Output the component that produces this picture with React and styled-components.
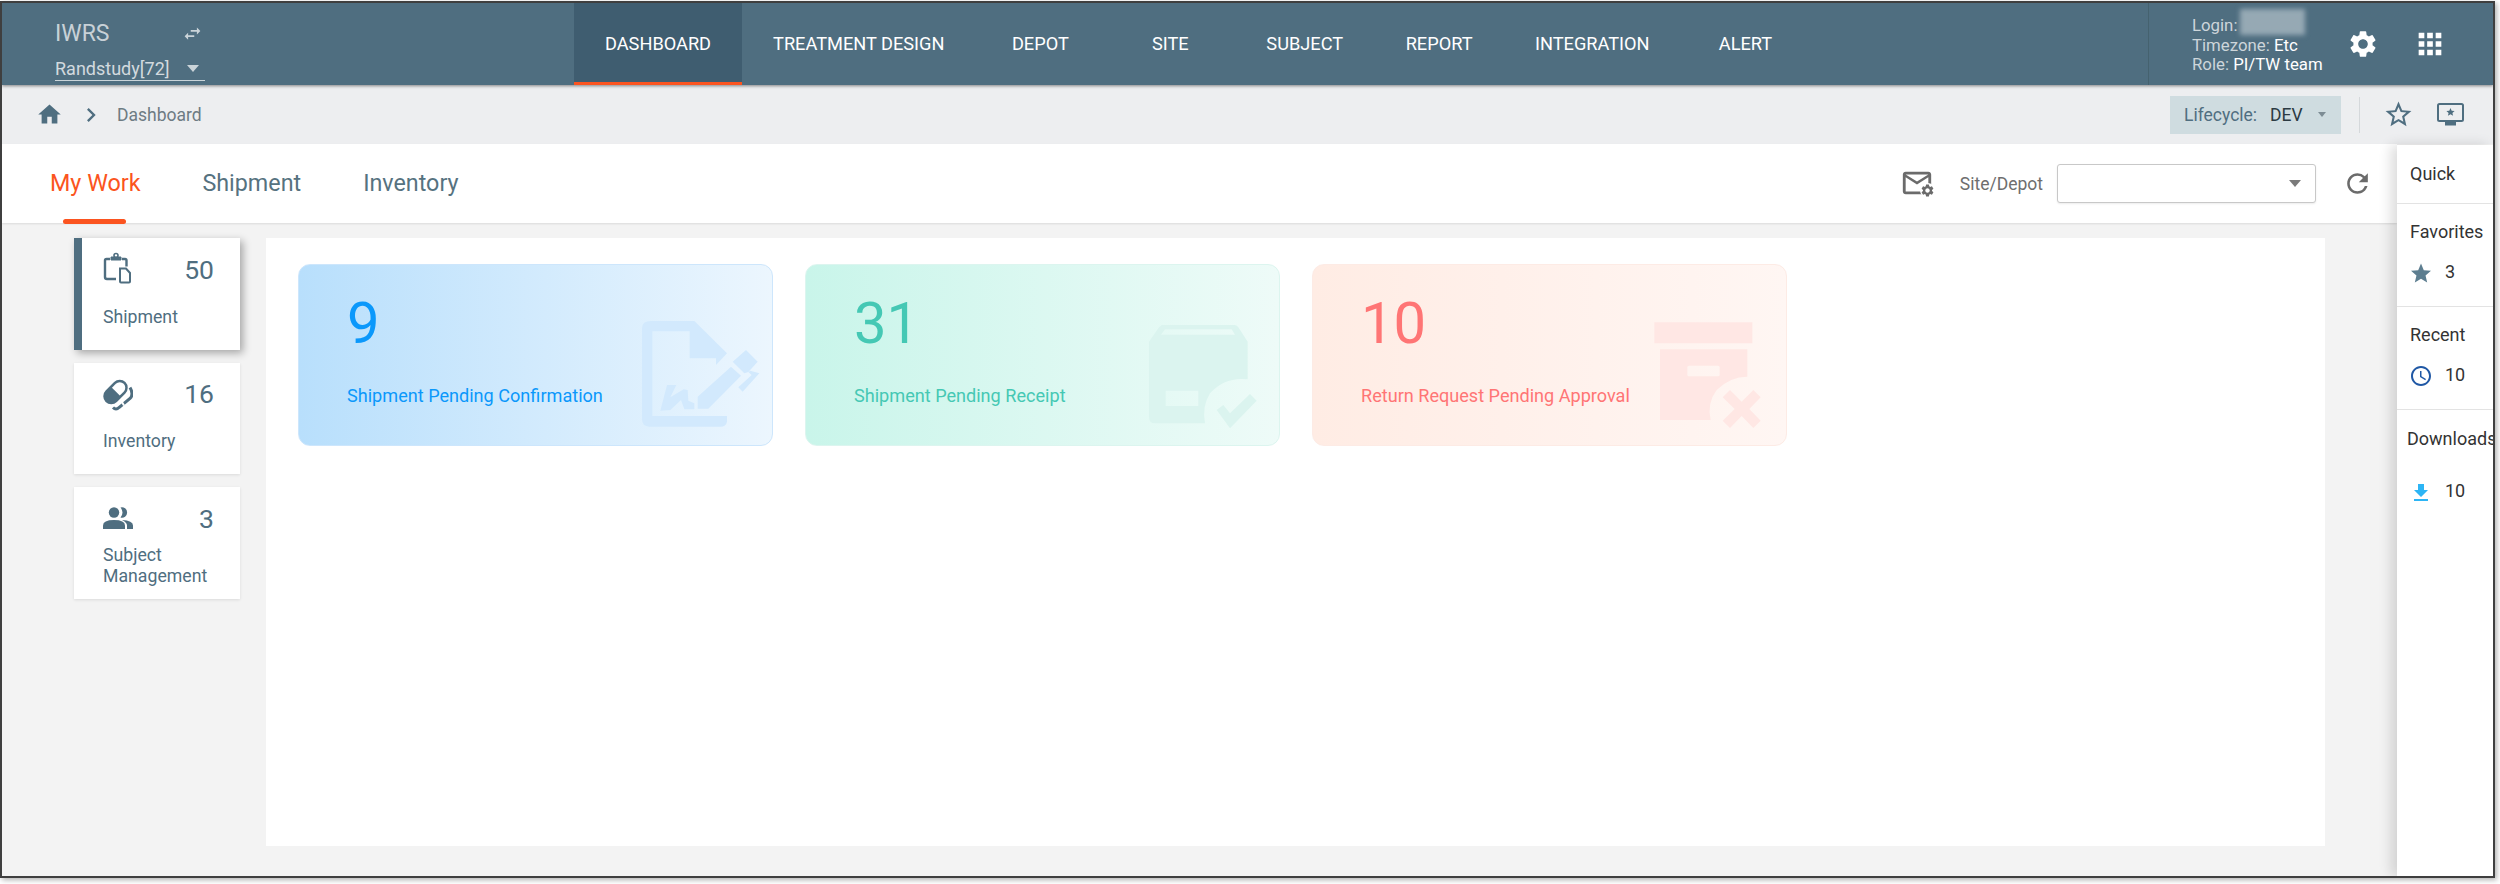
import React from 'react';
import styled, { createGlobalStyle } from 'styled-components';
import {
  MdHome, MdChevronRight, MdSettings, MdApps, MdStarBorder, MdSwapHoriz, MdRefresh,
  MdStar, MdAccessTime, MdFileDownload, MdMailOutline,
} from 'react-icons/md';

const Global = createGlobalStyle`
  html, body { margin: 0; padding: 0; background: #fff; }
  body { font-family: Roboto, "Liberation Sans", sans-serif; width: 2500px; height: 884px; overflow: hidden; }
  * { box-sizing: border-box; }
`;

const Frame = styled.div`
  width: 2495px; height: 877px; margin-top: 1px;
  border: 2px solid #3f3f3f;
  box-shadow: 2px 2px 5px rgba(0,0,0,.3);
  display: flex; flex-direction: column;
  background: #f3f3f3; overflow: hidden;
`;

/* ---------- header ---------- */
const Header = styled.header`
  height: 82px; flex: none; background: #4f6e80; display: flex; color: #fff;
  box-shadow: 0 1px 3px rgba(0,0,0,.45); position: relative; z-index: 3;
`;
const Brand = styled.div`width: 572px; flex: none; padding: 17px 0 0 53px;`;
const BrandTop = styled.div`display: flex; align-items: center; width: 150px; height: 26px; justify-content: space-between;
  color: rgba(255,255,255,.7); font-size: 23px; padding-right: 2px;`;
const StudySelect = styled.div`
  width: 150px; margin-top: 10px; height: 25px; border-bottom: 1.5px solid rgba(255,255,255,.7);
  display: flex; align-items: center; justify-content: space-between; font-size: 18px; color: rgba(255,255,255,.75); padding-right: 6px;
`;
const Caret = styled.span`
  display: inline-block; width: 0; height: 0; flex: none;
  border-left: ${p => p.$size || 6}px solid transparent;
  border-right: ${p => p.$size || 6}px solid transparent;
  border-top: ${p => (p.$size || 6) + 1}px solid ${p => p.$color || 'rgba(255,255,255,.7)'};
`;
const Nav = styled.nav`display: flex; height: 100%; flex: none;`;
const NavItem = styled.div`
  min-width: 130px; padding: 2px 31px 0; display: flex; align-items: center; justify-content: center;
  font-size: 18.2px; color: #fff; white-space: nowrap;
  background: ${p => (p.$active ? '#3f5d70' : 'transparent')};
  border-bottom: 3px solid ${p => (p.$active ? '#fb5420' : 'transparent')};
`;
const UserArea = styled.div`
  margin-left: auto; width: 345px; flex: none; border-left: 1px solid #45626f; display: flex; align-items: center; padding-left: 43px; position: relative;
`;
const UserInfo = styled.div`font-size: 16.8px; line-height: 19.5px; color: rgba(255,255,255,.72); width: 142px; padding-top: 3px; white-space: nowrap;`;
const UserValue = styled.span`color: #fff;`;
const Redacted = styled.span`
  position: absolute; left: 91px; top: 6px; width: 65px; height: 26px; background: #96a9b4; filter: blur(2.5px);
`;
const HeaderIcons = styled.div`display: flex; align-items: center; gap: 34px; margin-left: 13px; color: #fff;`;

/* ---------- breadcrumb ---------- */
const Crumbs = styled.div`
  height: 59px; flex: none; background: #edeef0; display: flex; align-items: center; padding-left: 34px; color: #4f6e80;
`;
const CrumbText = styled.span`font-size: 17.5px; color: #6e7b83; margin-left: 12px;`;
const ChevronIcon = styled(MdChevronRight)`margin-left: 14px;`;
const Life = styled.div`
  margin-left: auto; width: 171px; height: 38px; background: #cfdce0; display: flex; align-items: center; padding-left: 14px; font-size: 17.5px; color: #4f6e80;
`;
const LifeValue = styled.span`color: #2c3a42; margin: 0 15px 0 13px;`;
const CrumbDivider = styled.div`width: 1px; height: 36px; background: #d5d8db; margin: 0 23px 0 18px;`;
const CrumbIcons = styled.div`display: flex; align-items: center; gap: 23px; margin-right: 29px; color: #4f6e80;`;

/* ---------- body ---------- */
const Body = styled.div`flex: 1; display: flex; min-height: 0; position: relative;`;
const Main = styled.div`flex: 1; min-width: 0; display: flex; flex-direction: column;`;
const Tabs = styled.div`
  height: 79px; flex: none; background: #fff; display: flex; align-items: center; padding: 0 24px 0 48px;
  box-shadow: 0 1px 2px rgba(0,0,0,.1);
`;
const Tab = styled.div`
  position: relative; font-size: 23.3px; margin-right: 62px; padding-bottom: 2px;
  color: ${p => (p.$active ? '#fb5420' : '#56727f')};
  ${p => p.$active && `&::after {
    content: ''; position: absolute; left: 13px; bottom: -25px; width: 63px; height: 5px; border-radius: 3px; background: #fb5420;
  }`}
`;
const TabTools = styled.div`margin-left: auto; display: flex; align-items: center; color: #6b6b6b;`;
const MailIcon = styled.span`position: relative; display: inline-flex; width: 32px; height: 28px; margin-right: 26px;`;
const MailGlyph = styled(MdMailOutline)`margin: -4px 0 0 -2px;`;
const MailGear = styled(MdSettings)`position: absolute; right: -1px; bottom: 0; background: #fff; border-radius: 50%;`;
const SiteLabel = styled.span`font-size: 17.5px; color: #6e6e6e; margin-right: 14px;`;
const SiteSelect = styled.div`
  width: 259px; height: 39px; border: 1px solid #c8c8c8; border-radius: 3px; display: flex; align-items: center; justify-content: flex-end; padding-right: 14px;
  box-shadow: 0 1px 2px rgba(0,0,0,.08); margin-right: 26px; background: #fff;
`;
const Content = styled.div`flex: 1; min-height: 0; display: flex; padding: 15px 72px 30px 72px;`;
const SideCol = styled.div`width: 166px; flex: none; display: flex; flex-direction: column; gap: 13px; margin-right: 26px;`;
const SideCard = styled.div`
  height: 111.5px; background: #fff; color: #4f6e80; padding: 16px 26px 0 ${p => (p.$active ? 21 : 29)}px;
  border-left: ${p => (p.$active ? '8px solid #4f6e80' : '0')};
  box-shadow: ${p => (p.$active ? '3px 3px 8px rgba(0,0,0,.32)' : '0 1px 3px rgba(0,0,0,.1)')};
`;
const SideTop = styled.div`height: 30px; display: flex; align-items: center; justify-content: space-between;`;
const SideIconBox = styled.span`display: inline-flex; width: 31px; height: 32px; align-items: center;`;
const SideCount = styled.span`font-size: 26.5px;`;
const SideLabel = styled.div`height: 44px; margin-top: 11px; display: flex; align-items: center; font-size: 17.7px; line-height: 21px;`;
const Panel = styled.div`flex: 1; background: #fff; padding: 26px 32px; display: flex; gap: 32px; align-items: flex-start;`;
const StatCard = styled.div`
  position: relative; width: 475px; height: 182px; border-radius: 12px; padding: 24px 0 0 48px; overflow: hidden;
  border: 1px solid ${p => p.$border};
  background: linear-gradient(90deg, ${p => p.$from}, ${p => p.$to});
  color: ${p => p.$color};
`;
const StatNumber = styled.div`font-size: 58px; line-height: 68px;`;
const StatLabel = styled.div`font-size: 18.1px; line-height: 24px; margin-top: 27px; position: relative; z-index: 1;`;
const Watermark = styled.svg`position: absolute; right: ${p => p.$right}px; bottom: 10px; width: 140px; height: 125px;`;

/* ---------- quick panel ---------- */
const Quick = styled.aside`
  width: 96px; flex: none; background: #fff; margin-top: 1px; box-shadow: -6px 0 12px rgba(0,0,0,.14); color: #333; font-size: 18px; overflow: hidden; position: relative; z-index: 2;
`;
const QuickSection = styled.div`
  height: ${p => p.$h}px; padding: ${p => p.$pt}px 0 0 ${p => p.$pl || 13}px; border-bottom: ${p => (p.$last ? '0' : '1.5px solid #e3e3e3')}; white-space: nowrap;
`;
const QuickTitle = styled.div`line-height: 22px;`;
const QuickRow = styled.div`display: flex; align-items: flex-start; margin-top: ${p => p.$mt}px; margin-left: ${p => p.$ml || 0}px; height: 26px;`;
const QuickIcon = styled.span`display: inline-flex; width: ${p => p.$w}px; flex: none; justify-content: center; color: ${p => p.$color};`;
const QuickValue = styled.span`line-height: 18px; margin: ${p => p.$mt || 0}px 0 0 ${p => p.$ml}px; font-size: 18px;`;

/* ---------- icons drawn by hand ---------- */
const ClipboardIcon = () => (
  <svg width="30" height="34" viewBox="14 9 30 31" fill="none" stroke="#4f6e80" strokeWidth="2.4">
    <path d="M21 14.5h-3.5q-1.5 0-1.5 1.5v16.5q0 2 2 2h9" />
    <path d="M33 14.5h3q1.5 0 1.5 1.5v6" />
    <path d="M22 12.5h10v3h-10z" fill="#4f6e80" strokeWidth="1" />
    <circle cx="27" cy="11" r="2" strokeWidth="1.6" />
    <path d="M31 24h6l4 4.5V37q0 1-1 1h-8q-1 0-1-1z" strokeWidth="2" />
  </svg>
);
const PillIcon = () => (
  <svg width="30" height="34" viewBox="14 9 30 31" fill="none">
    <g transform="rotate(-45 26.5 22.5)">
      <rect x="12.5" y="14.5" width="28" height="16" rx="8" fill="#4f6e80" />
      <path d="M27 17h5.5a5.5 5.5 0 0 1 0 11H27z" fill="#fff" />
    </g>
    <path d="M41 18q4 7 0 11l-11 9q-3 3-6 0" stroke="#4f6e80" strokeWidth="3" />
    <path d="M35 36l-3-5" stroke="#fff" strokeWidth="2" />
  </svg>
);
const PeopleIcon = () => (
  <svg width="30" height="22" viewBox="0 0 30 22" fill="#4f6e80">
    <circle cx="11" cy="5.5" r="5.2" />
    <path d="M17.5.5a5.2 5.2 0 1 1 0 10a8 8 0 0 0 0-10z" />
    <path d="M0 22v-3.5q0-5.5 11-5.5t11 5.5V22z" />
    <path d="M19 13q11 .5 11 5.5V22h-6v-3.5q0-3-5-5.5z" />
  </svg>
);
const ScreenStar = () => (
  <svg width="27" height="23" viewBox="0 0 27 23">
    <rect x="1" y="1" width="25" height="17" rx="1.5" fill="none" stroke="#4f6e80" strokeWidth="2" />
    <rect x="8" y="19" width="11" height="3.5" fill="#4f6e80" />
    <path d="M13.5 5l1.2 2.7 2.9.3-2.2 1.9.7 2.9-2.6-1.5-2.6 1.5.7-2.9-2.2-1.9 2.9-.3z" fill="#4f6e80" />
  </svg>
);
const DocMark = () => (
  <Watermark $right={1} viewBox="0 0 420 375" fill="#d2e9fd">
    <path d="M60 33H190L288 130L255 165V145H176V64H64V318H288V335Q285 350 268 350H55Q33 350 33 328V55Q33 33 60 33Z" />
    <path d="M88 302L108 225H136L118 262L158 238L170 240L172 272L190 280V298H160L150 270L118 300Z" />
    <path d="M200 260L300 170L330 197L232 296H200Z" />
    <path d="M305 155L345 120L380 155L350 188L358 182L385 190L335 245L322 232L362 195L352 186L340 190Z" />
  </Watermark>
);
const BoxMark = () => (
  <Watermark $right={4} viewBox="0 0 420 375" fill="#dbf4ef">
    <path fillRule="evenodd" d="M80 45H298Q305 45 310 52L338 95V208Q270 200 225 250Q200 290 210 340H60Q42 340 42 320V95L72 52ZM90 58L78 74H300L290 58ZM92 242V288H190V242Z" />
    <path d="M245 300L265 285L285 310L345 252L365 272L285 355Z" />
  </Watermark>
);
const ArchiveMark = () => (
  <Watermark $right={6} viewBox="0 0 420 375" fill="#ffe7e4">
    <path d="M43 37H337V100H43Z" />
    <path fillRule="evenodd" d="M60 118H322V200Q270 200 230 240Q200 280 212 330H60ZM147 167Q142 167 142 172V194Q142 199 147 199H234Q239 199 239 194V172Q239 167 234 167Z" />
    <path d="M270 240L305 275L340 240L362 262L328 297L362 332L340 354L305 318L270 354L248 332L284 297L248 262Z" />
  </Watermark>
);

const navItems = ['DASHBOARD', 'TREATMENT DESIGN', 'DEPOT', 'SITE', 'SUBJECT', 'REPORT', 'INTEGRATION', 'ALERT'];
const sideItems = [
  { icon: <ClipboardIcon />, count: 50, label: 'Shipment', active: true },
  { icon: <PillIcon />, count: 16, label: 'Inventory' },
  { icon: <PeopleIcon />, count: 3, label: <>Subject<br />Management</> },
];
const stats = [
  { n: 9, label: 'Shipment Pending Confirmation', color: '#0b98fb', from: '#b8dffc', to: '#ecf6fe', border: '#cde6fc', mark: <DocMark /> },
  { n: 31, label: 'Shipment Pending Receipt', color: '#45c8b4', from: '#c9f5ea', to: '#eefbf8', border: '#dcf5ef', mark: <BoxMark /> },
  { n: 10, label: 'Return Request Pending Approval', color: '#ff7575', from: '#ffece4', to: '#fff6f3', border: '#fdebe5', mark: <ArchiveMark /> },
];

export default function App() {
  return (
    <>
      <Global />
      <Frame>
        <Header>
          <Brand>
            <BrandTop>IWRS<MdSwapHoriz size={21} color="rgba(255,255,255,.7)" /></BrandTop>
            <StudySelect>Randstudy[72]<Caret /></StudySelect>
          </Brand>
          <Nav>
            {navItems.map((n, i) => <NavItem key={n} $active={i === 0}>{n}</NavItem>)}
          </Nav>
          <UserArea>
            <UserInfo>
              <div>Login:<Redacted /></div>
              <div>Timezone: <UserValue>Etc</UserValue></div>
              <div>Role: <UserValue>PI/TW team</UserValue></div>
            </UserInfo>
            <HeaderIcons>
              <MdSettings size={32} />
              <MdApps size={34} />
            </HeaderIcons>
          </UserArea>
        </Header>
        <Crumbs>
          <MdHome size={27} />
          <ChevronIcon size={28} />
          <CrumbText>Dashboard</CrumbText>
          <Life>Lifecycle:<LifeValue>DEV</LifeValue><Caret $size={4.5} $color="#7d8c94" /></Life>
          <CrumbDivider />
          <CrumbIcons>
            <MdStarBorder size={31} />
            <ScreenStar />
          </CrumbIcons>
        </Crumbs>
        <Body>
          <Main>
            <Tabs>
              <Tab $active>My Work</Tab>
              <Tab>Shipment</Tab>
              <Tab>Inventory</Tab>
              <TabTools>
                <MailIcon>
                  <MailGlyph size={34} />
                  <MailGear size={15} />
                </MailIcon>
                <SiteLabel>Site/Depot</SiteLabel>
                <SiteSelect><Caret $color="#7a7a7a" /></SiteSelect>
                <MdRefresh size={31} />
              </TabTools>
            </Tabs>
            <Content>
              <SideCol>
                {sideItems.map((s) => (
                  <SideCard key={s.count} $active={s.active}>
                    <SideTop>
                      <SideIconBox>{s.icon}</SideIconBox>
                      <SideCount>{s.count}</SideCount>
                    </SideTop>
                    <SideLabel><span>{s.label}</span></SideLabel>
                  </SideCard>
                ))}
              </SideCol>
              <Panel>
                {stats.map((s) => (
                  <StatCard key={s.n} $color={s.color} $from={s.from} $to={s.to} $border={s.border}>
                    <StatNumber>{s.n}</StatNumber>
                    <StatLabel>{s.label}</StatLabel>
                    {s.mark}
                  </StatCard>
                ))}
              </Panel>
            </Content>
          </Main>
          <Quick>
            <QuickSection $h={59} $pt={18}><QuickTitle>Quick</QuickTitle></QuickSection>
            <QuickSection $h={103} $pt={17}>
              <QuickTitle>Favorites</QuickTitle>
              <QuickRow $mt={17} $ml={-1}>
                <QuickIcon $w={24} $color="#5d7e90"><MdStar size={27} /></QuickIcon>
                <QuickValue $ml={12} $mt={3}>3</QuickValue>
              </QuickRow>
            </QuickSection>
            <QuickSection $h={103} $pt={17}>
              <QuickTitle>Recent</QuickTitle>
              <QuickRow $mt={17} $ml={-1}>
                <QuickIcon $w={24} $color="#2058a5"><MdAccessTime size={26} /></QuickIcon>
                <QuickValue $ml={12} $mt={3}>10</QuickValue>
              </QuickRow>
            </QuickSection>
            <QuickSection $h={260} $pt={18} $pl={10} $last>
              <QuickTitle>Downloads</QuickTitle>
              <QuickRow $mt={30} $ml={2}>
                <QuickIcon $w={24} $color="#2db5f5"><MdFileDownload size={26} /></QuickIcon>
                <QuickValue $ml={12} $mt={2}>10</QuickValue>
              </QuickRow>
            </QuickSection>
          </Quick>
        </Body>
      </Frame>
    </>
  );
}
